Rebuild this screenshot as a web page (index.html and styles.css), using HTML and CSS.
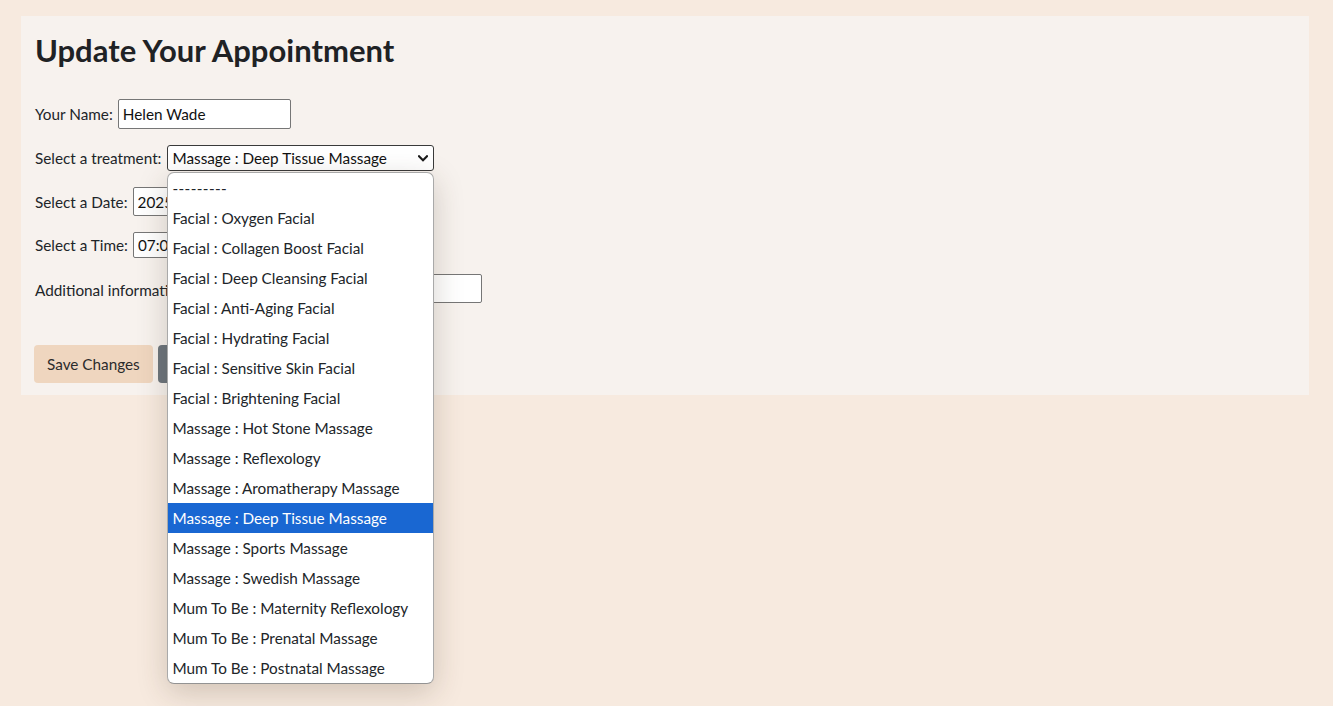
FILE: index.html
```html
<!DOCTYPE html>
<html lang="en">
<head>
<meta charset="utf-8">
<title>Update Your Appointment</title>
<link rel="stylesheet" href="styles.css">
</head>
<body>
<main class="page">
  <section class="card">
    <h1 class="title">Update Your Appointment</h1>
    <form class="form">
      <div class="row">
        <label class="label" for="name">Your Name:</label>
        <input id="name" class="field field-name" type="text" value="Helen Wade">
      </div>
      <div class="row row-select">
        <span class="label">Select a treatment:</span>
        <div class="select">
          <div class="select-box">
            <span>Massage : Deep Tissue Massage</span>
            <svg class="chevron" width="10" height="7" viewBox="0 0 10 7" aria-hidden="true"><path d="M1 1.2 L5 5.2 L9 1.2" fill="none" stroke="#1b1b1b" stroke-width="2.1" stroke-linecap="square"/></svg>
          </div>
          <ul class="menu">
            <li class="menu-item menu-empty">---------</li>
            <li class="menu-item">Facial : Oxygen Facial</li>
            <li class="menu-item">Facial : Collagen Boost Facial</li>
            <li class="menu-item">Facial : Deep Cleansing Facial</li>
            <li class="menu-item">Facial : Anti-Aging Facial</li>
            <li class="menu-item">Facial : Hydrating Facial</li>
            <li class="menu-item">Facial : Sensitive Skin Facial</li>
            <li class="menu-item">Facial : Brightening Facial</li>
            <li class="menu-item">Massage : Hot Stone Massage</li>
            <li class="menu-item">Massage : Reflexology</li>
            <li class="menu-item">Massage : Aromatherapy Massage</li>
            <li class="menu-item is-selected">Massage : Deep Tissue Massage</li>
            <li class="menu-item">Massage : Sports Massage</li>
            <li class="menu-item">Massage : Swedish Massage</li>
            <li class="menu-item">Mum To Be : Maternity Reflexology</li>
            <li class="menu-item">Mum To Be : Prenatal Massage</li>
            <li class="menu-item">Mum To Be : Postnatal Massage</li>
          </ul>
        </div>
      </div>
      <div class="row">
        <label class="label" for="date">Select a Date:</label>
        <input id="date" class="field field-date" type="text" value="2025-06-14">
      </div>
      <div class="row">
        <label class="label" for="time">Select a Time:</label>
        <input id="time" class="field field-time" type="text" value="07:00">
      </div>
      <div class="row row-info">
        <label class="label" for="info">Additional information:</label>
        <input id="info" class="field field-info" type="text">
      </div>
      <div class="actions">
        <button type="button" class="btn btn-save">Save Changes</button>
        <button type="button" class="btn btn-cancel">Cancel</button>
      </div>
    </form>
  </section>
</main>
</body>
</html>
```
FILE: styles.css
```css
html, body {
  margin: 0;
  min-height: 100%;
  background: #f7eadf;
}

body {
  font-family: Lato, "Open Sans", sans-serif;
  font-size: 15.3px;
  color: #212529;
}

.page {
  box-sizing: border-box;
  min-height: 706px;
  padding: 16px 24px 0 21px;
}

.card {
  background: #f7f2ee;
  padding: 16px 14px 12px;
}

.title {
  margin: 0 0 30px;
  font-size: 31px;
  font-weight: 700;
  line-height: 1.2;
  color: #1f2225;
}

.form {
  margin: 0;
}

.row {
  display: flex;
  align-items: center;
  gap: 5px;
  margin-bottom: 16px;
}

.row-select {
  position: relative;
  z-index: 5;
  gap: 6px;
}

.label {
  white-space: nowrap;
}

.field {
  box-sizing: border-box;
  height: 30px;
  border: 1px solid #767676;
  border-radius: 2px;
  padding: 0 4px;
  background: #fff;
  font: inherit;
  color: #111;
}

.field-name { width: 173px; }
.field-date { width: 160px; height: 29px; }
.field-time { width: 110px; height: 26px; }

.row-info {
  width: 447px;
  margin-bottom: 42px;
}

.row-info .label {
  padding-top: 3px;
}

.field-info {
  flex: 1;
  height: 29px;
}

.select {
  position: relative;
}

.select-box {
  box-sizing: border-box;
  width: 267px;
  height: 26px;
  border: 1px solid #3a3a3a;
  border-radius: 3px;
  background: #fff;
  display: flex;
  align-items: center;
  justify-content: space-between;
  padding: 0 4px;
  color: #111;
}

.chevron {
  display: block;
  margin-right: 1px;
}

.menu {
  position: absolute;
  top: calc(100% + 1px);
  left: 0;
  z-index: 10;
  box-sizing: border-box;
  width: 267px;
  margin: 0;
  padding: 0;
  list-style: none;
  background: #fff;
  border: 1px solid #a9a9a9;
  border-bottom-color: #939393;
  border-radius: 7px;
  overflow: hidden;
  box-shadow: 0 8px 30px rgba(70, 50, 30, 0.22);
}

.menu-item {
  height: 30px;
  line-height: 30px;
  padding-left: 4px;
  white-space: nowrap;
  color: #212529;
}

.menu-empty {
  letter-spacing: 0.4px;
}

.menu-item.is-selected {
  background: #1967d2;
  color: #fff;
}

.actions {
  display: flex;
  gap: 5px;
  margin-left: -1px;
}

.btn {
  box-sizing: border-box;
  height: 38px;
  padding: 0 12px;
  border: 1px solid transparent;
  border-radius: 4px;
  font: inherit;
  cursor: pointer;
}

.btn-save {
  background: #efd6bf;
  color: #2b2b2b;
}

.btn-cancel {
  background: #6c757d;
  color: #fff;
}
```
